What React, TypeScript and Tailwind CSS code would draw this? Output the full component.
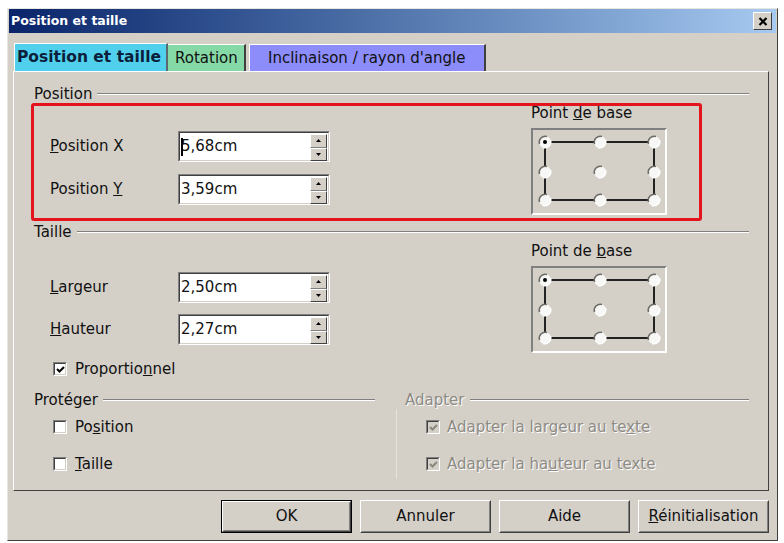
import React from "react";

function Spinner() {
  return (
    <div className="w-[17px] h-full flex flex-col bg-[#d4d0c8] my-[1px] mr-[1px]">
      <div className="flex-1 flex items-center justify-center border border-t-white border-l-white border-r-[#404040] border-b-[#808080]">
        <svg width="5" height="3" viewBox="0 0 5 3"><path d="M2.5 0 L5 3 L0 3 Z" fill="#000" /></svg>
      </div>
      <div className="flex-1 flex items-center justify-center border border-t-white border-l-white border-r-[#404040] border-b-[#404040]">
        <svg width="5" height="3" viewBox="0 0 5 3"><path d="M0 0 L5 0 L2.5 3 Z" fill="#000" /></svg>
      </div>
    </div>
  );
}

function Field({ label, value, cursor }: { label: React.ReactNode; value: string; cursor?: boolean }) {
  return (
    <div className="flex items-center h-[31px]">
      <div className="w-[128px]"><span>{label}</span></div>
      <div className="w-[152px] h-[31px] border border-t-[#808080] border-l-[#808080] border-r-white border-b-white">
        <div className="w-full h-full flex border border-t-[#404040] border-l-[#404040] border-r-[#d4d0c8] border-b-[#d4d0c8] bg-white">
          <div className="relative flex-1 flex items-center pl-[1px]">
            {cursor && <div className="absolute left-[1px] top-[5px] w-[2px] h-[18px] bg-black" />}
            <span>{value}</span>
          </div>
          <Spinner />
        </div>
      </div>
    </div>
  );
}

function CheckBox({ checked, disabled }: { checked?: boolean; disabled?: boolean }) {
  return (
    <div className="w-[14px] h-[14px] border border-t-[#808080] border-l-[#808080] border-r-white border-b-white">
      <div className={`w-full h-full border border-t-[#404040] border-l-[#404040] border-r-[#d4d0c8] border-b-[#d4d0c8] ${disabled ? "bg-[#d4d0c8]" : "bg-white"} flex items-center justify-center`}>
        {checked && (
          <svg width="9" height="9" viewBox="0 0 9 9">
            <path d="M1 4 L3.5 6.5 L8 2" stroke={disabled ? "#8a877f" : "#000"} strokeWidth="2" fill="none" />
          </svg>
        )}
      </div>
    </div>
  );
}

function Heading({ label, disabled, className = "" }: { label: string; disabled?: boolean; className?: string }) {
  return (
    <div className={`flex items-center h-[16px] ${className}`}>
      <span className={disabled ? "text-[#8e8b85] [text-shadow:1px_1px_0_#ffffff]" : ""}>{label}</span>
      <div className="flex-1 ml-[5px] border-t border-t-[#808080] border-b border-b-white" />
    </div>
  );
}

function PointGrid() {
  const xs = [12, 67, 121];
  const ys = [12, 42, 70];
  return (
    <div className="w-[136px] h-[87px] border-2 border-t-[#808080] border-l-[#808080] border-r-white border-b-white">
      <svg width="132" height="83" viewBox="0 0 132 83">
        <rect x="12" y="12" width="109" height="58" fill="none" stroke="#222" strokeWidth="2" />
        {ys.map((y, yi) =>
          xs.map((x, xi) => (
            <g key={`${xi}-${yi}`}>
              <circle cx={x} cy={y} r="6" fill="#f7f7f5" />
              <path d={`M ${x - 5.5} ${y + 2} A 6 6 0 0 1 ${x + 2} ${y - 5.5}`} stroke="#6d6b66" strokeWidth="1.5" fill="none" />
              <path d={`M ${x + 5.5} ${y - 2} A 6 6 0 0 1 ${x - 2} ${y + 5.5}`} stroke="#ffffff" strokeWidth="1.5" fill="none" />
              {xi === 0 && yi === 0 && <circle cx={x} cy={y} r="2" fill="#000" />}
            </g>
          ))
        )}
      </svg>
    </div>
  );
}

function Button({ children, primary }: { children: React.ReactNode; primary?: boolean }) {
  return (
    <div className={`w-[131px] h-[33px] ${primary ? "border border-black" : ""}`}>
      <div className="w-full h-full border border-t-white border-l-white border-r-[#404040] border-b-[#404040]">
        <div className="w-full h-full flex items-center justify-center border border-t-[#d4d0c8] border-l-[#d4d0c8] border-r-[#808080] border-b-[#808080]">
          <span>{children}</span>
        </div>
      </div>
    </div>
  );
}

const dis = "text-[#8e8b85] [text-shadow:1px_1px_0_#ffffff]";

export default function App() {
  return (
    <div className="w-[784px] h-[543px] bg-white pt-[8px] pl-[7px] font-['DejaVu_Sans',sans-serif] text-[15px] text-[#111] leading-none">
      <div className="w-[771px] h-[533px] bg-[#d4d0c8] border border-t-[#e8e6e1] border-l-[#e8e6e1] border-r-[#404040] border-b-[#404040] flex flex-col">
        <div className="mx-[1px] h-[24px] bg-linear-to-r from-[#0a246a] to-[#a6caf0] flex items-center pl-[2px] pr-[4px]">
          <span className="text-white font-bold text-[12.5px]">Position et taille</span>
          <div className="ml-auto w-[19px] h-[18px] bg-[#d4d0c8] border border-t-white border-l-white border-r-[#404040] border-b-[#404040] flex items-center justify-center">
            <svg width="10" height="9" viewBox="0 0 10 9">
              <path d="M1.5 1 L8.5 8 M8.5 1 L1.5 8" stroke="#000" strokeWidth="2.2" />
            </svg>
          </div>
        </div>

        <div className="mt-[10px] ml-[6px] flex items-end h-[28px]">
          <div className="w-[154px] h-[28px] bg-[#50d0ec] border-t border-l border-t-white border-l-white border-r-2 border-r-[#5a6a70] flex items-center pl-[2px] font-bold text-[15.5px] text-[#0b1e3a]">
            <span>Position et taille</span>
          </div>
          <div className="w-[78px] h-[27px] bg-[#85d9a6] border-t border-t-white border-r-2 border-r-[#404040] flex items-center pl-[7px]">
            <span>Rotation</span>
          </div>
          <div className="ml-[3px] w-[237px] h-[27px] bg-[#8c8cfa] border-t border-l border-t-white border-l-white border-r-2 border-r-[#404040] flex items-center pl-[18px]">
            <span>Inclinaison / rayon d'angle</span>
          </div>
        </div>

        <div className="relative ml-[5px] w-[756px] h-[420px] border border-t-white border-l-white border-r-[#404040] border-b-[#404040] pl-[20px] pr-[19px] pt-[14px]">
          <Heading label="Position" />
          <div className="flex">
            <div className="w-[497px] pt-[29px] pl-[16px] flex flex-col gap-[12px]">
              <Field label={<><u>P</u>osition X</>} value="5,68cm" cursor />
              <Field label={<>Position <u>Y</u></>} value="3,59cm" />
            </div>
            <div className="pt-[2px]">
              <div className="h-[18px] flex items-center"><span>Point <u>d</u>e base</span></div>
              <div className="mt-[6px]"><PointGrid /></div>
            </div>
          </div>

          <Heading label="Taille" className="mt-[9px]" />
          <div className="flex">
            <div className="w-[497px] pt-[32px] pl-[16px] flex flex-col">
              <Field label={<><u>L</u>argeur</>} value="2,50cm" />
              <div className="mt-[11px]"><Field label={<><u>H</u>auteur</>} value="2,27cm" /></div>
              <div className="mt-[15px] h-[18px] flex items-center pl-[3px] gap-[8px]">
                <CheckBox checked />
                <span>Proportio<u>n</u>nel</span>
              </div>
            </div>
            <div className="pt-[2px]">
              <div className="h-[18px] flex items-center"><span>Point de <u>b</u>ase</span></div>
              <div className="mt-[6px]"><PointGrid /></div>
            </div>
          </div>

          <div className="mt-[14px] flex">
            <div className="w-[341px]">
              <Heading label="Protéger" />
              <div className="mt-[10px] pl-[19px] h-[18px] flex items-center gap-[8px]">
                <CheckBox />
                <span>Po<u>s</u>ition</span>
              </div>
              <div className="mt-[19px] pl-[19px] h-[18px] flex items-center gap-[8px]">
                <CheckBox />
                <span><u>T</u>aille</span>
              </div>
            </div>
            <div className="ml-[21px] mt-[17px] w-px h-[70px] bg-[#e6e3de]" />
            <div className="ml-[8px] flex-1">
              <Heading label="Adapter" disabled />
              <div className="mt-[10px] pl-[21px] h-[18px] flex items-center gap-[7px]">
                <CheckBox checked disabled />
                <span className={dis}>Adapter la largeur au te<u>x</u>te</span>
              </div>
              <div className="mt-[19px] pl-[21px] h-[18px] flex items-center gap-[7px]">
                <CheckBox checked disabled />
                <span className={dis}>Adapter la ha<u>u</u>teur au texte</span>
              </div>
            </div>
          </div>

          <div className="absolute left-[17px] top-[31px] w-[671px] h-[118px] border-[3px] border-[#e3141c] rounded-[3px]" />
        </div>

        <div className="mt-[9px] pr-[8px] flex justify-end gap-[8px]">
          <Button primary>OK</Button>
          <Button>Annuler</Button>
          <Button>Aide</Button>
          <Button><u>R</u>éinitialisation</Button>
        </div>
      </div>
    </div>
  );
}
